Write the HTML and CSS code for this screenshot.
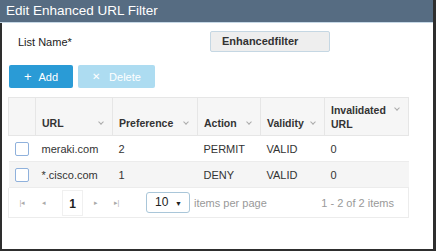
FILE: index.html
```html
<!DOCTYPE html>
<html lang="en">
<head>
  <meta charset="UTF-8">
  <title>Edit Enhanced URL Filter</title>
  <link rel="stylesheet" href="styles.css">
</head>
<body>
  <div class="frame">
    <div class="title-bar">Edit Enhanced URL Filter</div>

    <div class="content">
      <div class="form-row">
        <label class="label">List Name*</label>
        <div class="name-box">Enhancedfilter</div>
      </div>

      <div class="actions">
        <button class="btn btn-add"><span class="btn-icon">+</span>Add</button>
        <button class="btn btn-delete"><span class="btn-icon">&#x2715;</span>Delete</button>
      </div>

      <div class="grid">
        <table>
          <thead>
            <tr>
              <th class="col-check"></th>
              <th class="col-url"><div class="th-inner">URL<span class="sort"></span></div></th>
              <th class="col-pref"><div class="th-inner">Preference<span class="sort"></span></div></th>
              <th class="col-action"><div class="th-inner">Action<span class="sort"></span></div></th>
              <th class="col-valid"><div class="th-inner">Validity<span class="sort"></span></div></th>
              <th class="col-inv"><div class="th-inner">Invalidated<br>URL<span class="sort sort-top"></span></div></th>
            </tr>
          </thead>
          <tbody>
            <tr>
              <td class="col-check"><span class="checkbox"></span></td>
              <td>meraki.com</td>
              <td>2</td>
              <td>PERMIT</td>
              <td>VALID</td>
              <td>0</td>
            </tr>
            <tr class="alt">
              <td class="col-check"><span class="checkbox"></span></td>
              <td>*.cisco.com</td>
              <td>1</td>
              <td>DENY</td>
              <td>VALID</td>
              <td>0</td>
            </tr>
          </tbody>
        </table>

        <div class="pager">
          <span class="pg-btn">&#x7C;&#x25C2;</span>
          <span class="pg-btn">&#x25C2;</span>
          <span class="pg-current">1</span>
          <span class="pg-btn">&#x25B8;</span>
          <span class="pg-btn">&#x25B8;&#x7C;</span>
          <div class="page-size">10 <span class="caret">&#x25BC;</span></div>
          <span class="pg-text">items per page</span>
          <span class="pg-info">1 - 2 of 2 items</span>
        </div>
      </div>
    </div>
  </div>
</body>
</html>
```

FILE: styles.css
```css
* {
  box-sizing: border-box;
}
body {
  margin: 0;
  font-family: "Liberation Sans", Arial, sans-serif;
  color: #333;
  background: #fff;
}
.frame {
  width: 436px;
  height: 251px;
  border-right: 3px solid #2e2e2e;
  border-bottom: 2px solid #2e2e2e;
  display: flex;
  flex-direction: column;
}
.title-bar {
  height: 23px;
  background-color: #566c82;
  border-bottom: 1px solid #c6d8e6;
  color: #fff;
  font-size: 13.5px;
  line-height: 22px;
  padding-left: 6px;
}
.content {
  flex: 1;
  border-left: 2px solid #2e2e2e;
  padding: 8px 0 0 6px;
}
.form-row {
  display: flex;
  align-items: center;
  height: 21px;
}
.label {
  font-size: 11px;
  width: 202px;
  padding-left: 10px;
  color: #222;
}
.name-box {
  width: 120px;
  height: 21px;
  background: #eeeeee;
  border: 1px solid #c5d7e3;
  border-radius: 2px;
  font-size: 11px;
  font-weight: bold;
  line-height: 19px;
  padding-left: 11px;
  color: #333;
}
.actions {
  display: flex;
  gap: 5px;
  margin-top: 13px;
  padding-left: 1px;
}
.btn {
  height: 23px;
  border: none;
  border-radius: 2px;
  color: #fff;
  font-family: inherit;
  font-size: 11px;
  padding: 0;
  display: flex;
  align-items: center;
  justify-content: center;
}
.btn-add {
  width: 64px;
  background-color: #2a9bd6;
}
.btn-delete {
  width: 77px;
  background-color: #addcf1;
}
.btn-icon {
  font-size: 13px;
  margin-right: 7px;
  font-weight: 300;
}
.btn-delete .btn-icon {
  font-size: 10px;
  margin-right: 9px;
}
.grid {
  width: 401px;
  margin-top: 9px;
}
table {
  width: 100%;
  border-collapse: collapse;
  font-size: 11px;
}
th {
  height: 38px;
  background-color: #f6f6f6;
  border: 1px solid #e6e6e6;
  text-align: left;
  font-weight: bold;
  font-size: 10.5px;
  color: #333;
  padding: 0 0 0 6px;
  vertical-align: middle;
}
.th-inner {
  position: relative;
  line-height: 14px;
  padding-top: 12px;
}
.col-inv .th-inner {
  padding-top: 0;
}
.sort {
  position: absolute;
  right: 9px;
  top: 16px;
  width: 4px;
  height: 4px;
  border-right: 1px solid #aaa;
  border-bottom: 1px solid #aaa;
  transform: rotate(45deg);
}
.sort-top {
  top: 3px;
}
td {
  height: 26px;
  padding: 0 0 0 6px;
  border-top: 1px solid #ececec;
  border-bottom: 1px solid #ececec;
  color: #333;
}
tr.alt td {
  background-color: #f5f5f5;
}
.col-check {
  width: 27px;
  padding: 0;
  text-align: center;
}
.col-url { width: 77px; }
.col-pref { width: 85px; }
.col-action { width: 63px; }
.col-valid { width: 64px; }
.checkbox {
  display: inline-block;
  width: 14px;
  height: 14px;
  border: 1px solid #8fb1dc;
  border-radius: 2px;
  background: #fff;
  vertical-align: middle;
}
.pager {
  height: 30px;
  border: 1px solid #ececec;
  border-top: none;
  display: flex;
  align-items: center;
  font-size: 11px;
  padding-left: 3px;
}
.pg-btn {
  color: #aaa;
  font-size: 7px;
  width: 21px;
  text-align: center;
}
.pg-current {
  width: 21px;
  height: 26px;
  line-height: 26px;
  text-align: center;
  font-weight: bold;
  font-size: 12px;
  color: #222;
  background: #fff;
  border: 1px solid #f0f0f0;
  margin: 0 2px 0 8px;
}
.page-size {
  margin-left: 19px;
  width: 44px;
  height: 21px;
  border: 1px solid #a9c6d9;
  border-radius: 3px;
  padding-left: 8px;
  line-height: 19px;
  font-size: 12px;
  color: #222;
  display: flex;
  justify-content: space-between;
}
.caret {
  font-size: 7px;
  padding-right: 7px;
  padding-top: 1px;
}
.pg-text {
  margin-left: 4px;
  color: #999;
}
.pg-info {
  margin-left: auto;
  padding-right: 14px;
  color: #999;
}
```
